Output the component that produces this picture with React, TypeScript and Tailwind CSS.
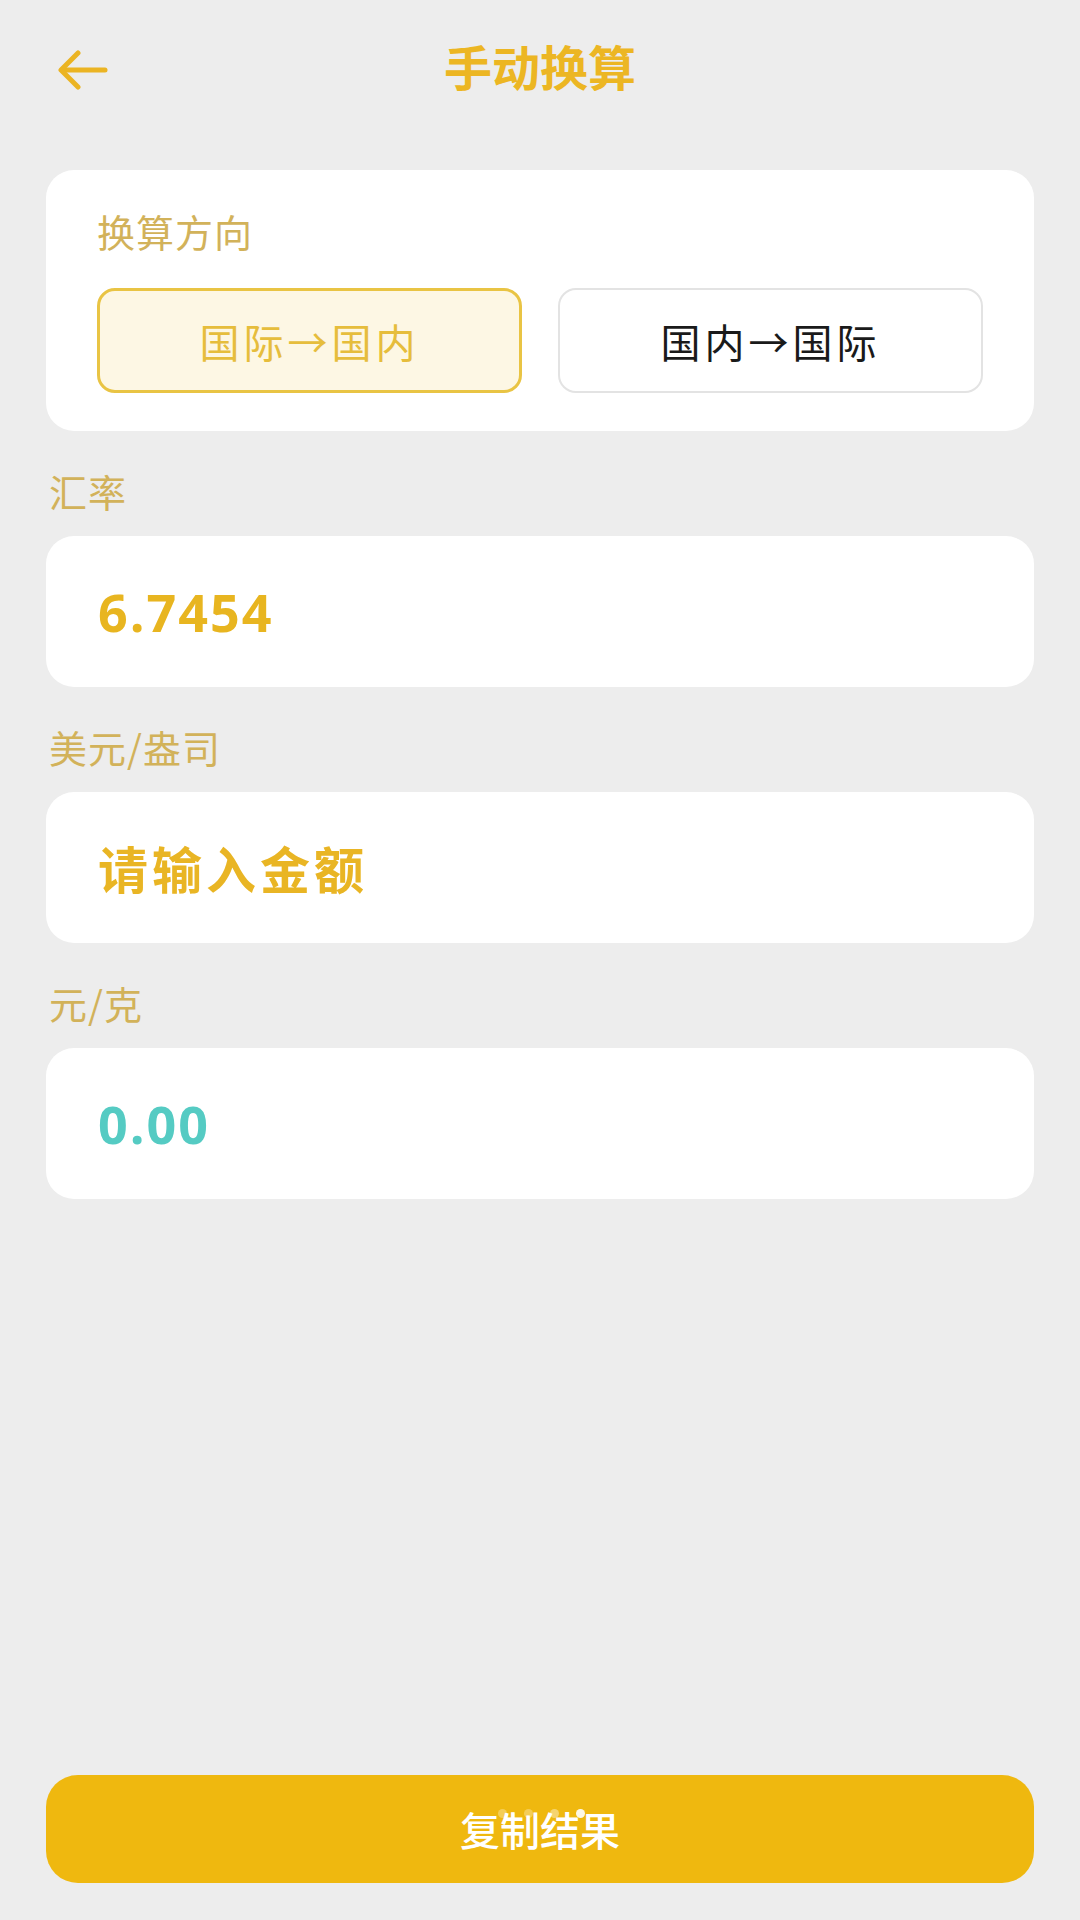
const cjk = { fontFamily: '"Noto Sans CJK SC", "Noto Sans", sans-serif' };
const latin = { fontFamily: '"Open Sans", "Noto Sans", sans-serif' };

function BackArrow() {
    return (
        <svg width="50" height="40" viewBox="0 0 50 40" fill="none" stroke="#ebb423" strokeWidth="5" strokeLinecap="round" strokeLinejoin="round">
            <path d="M47 20H4" />
            <path d="M20 3L3 20L20 37" />
        </svg>
    );
}

function FieldLabel({ text }: { text: string }) {
    return (
        <div className="mt-[41px] text-[38px] leading-[38px] text-[#d2b25a] pl-[3px] tracking-[1px]">{text}</div>
    );
}

function ValueCard({ children }: { children: React.ReactNode }) {
    return (
        <div className="mt-[26px] h-[151px] rounded-[28px] bg-white flex items-center px-[52px]">
            {children}
        </div>
    );
}

export default function App() {
    return (
        <div style={cjk} className="w-[1080px] h-[1920px] bg-[#ededed] flex flex-col">
            {/* Header */}
            <div className="h-[140px] grid grid-cols-3 items-center">
                <div className="pl-[58px] flex items-center">
                    <BackArrow />
                </div>
                <div className="text-center text-[48px] font-bold text-[#ecb623] leading-none mb-[10px]">手动换算</div>
                <div />
            </div>

            <div className="px-[46px] flex flex-col flex-1">
                {/* Direction card */}
                <div className="mt-[30px] rounded-[28px] bg-white pt-[42px] pb-[38px] px-[51px]">
                    <div className="text-[38px] leading-[38px] text-[#d2b25a] tracking-[1px]">换算方向</div>
                    <div className="mt-[38px] grid grid-cols-2 gap-[36px]">
                        <button className="h-[105px] rounded-[18px] border-[3px] border-[#e9c444] bg-[#fdf7e4] text-[40px] text-[#e6bd3c] tracking-[4px]">
                            国际→国内
                        </button>
                        <button className="h-[105px] rounded-[18px] border-2 border-[#e3e3e3] bg-white text-[40px] text-[#1a1a1a] tracking-[4px]">
                            国内→国际
                        </button>
                    </div>
                </div>

                <FieldLabel text="汇率" />
                <ValueCard>
                    <span style={latin} className="text-[52px] font-bold tracking-[2px] text-[#e8b520]">
                        6.7454
                    </span>
                </ValueCard>

                <FieldLabel text="美元/盎司" />
                <ValueCard>
                    <span className="text-[50px] font-bold text-[#e9b524] tracking-[4px]">请输入金额</span>
                </ValueCard>

                <FieldLabel text="元/克" />
                <ValueCard>
                    <span style={latin} className="text-[52px] font-bold tracking-[2px] text-[#55cbc3]">
                        0.00
                    </span>
                </ValueCard>

                {/* Copy button */}
                <button className="relative mt-auto mb-[37px] h-[108px] rounded-[32px] bg-[#efb80f] text-white text-[40px] font-medium">
                    复制结果
                    <span className="absolute left-[452px] top-[34px] flex gap-[17px]">
                        <span className="w-[9px] h-[9px] rounded-full bg-white/30" />
                        <span className="w-[9px] h-[9px] rounded-full bg-white/30" />
                        <span className="w-[9px] h-[9px] rounded-full bg-white/40" />
                        <span className="w-[9px] h-[9px] rounded-full bg-white/90" />
                    </span>
                </button>
            </div>
        </div>
    );
}
